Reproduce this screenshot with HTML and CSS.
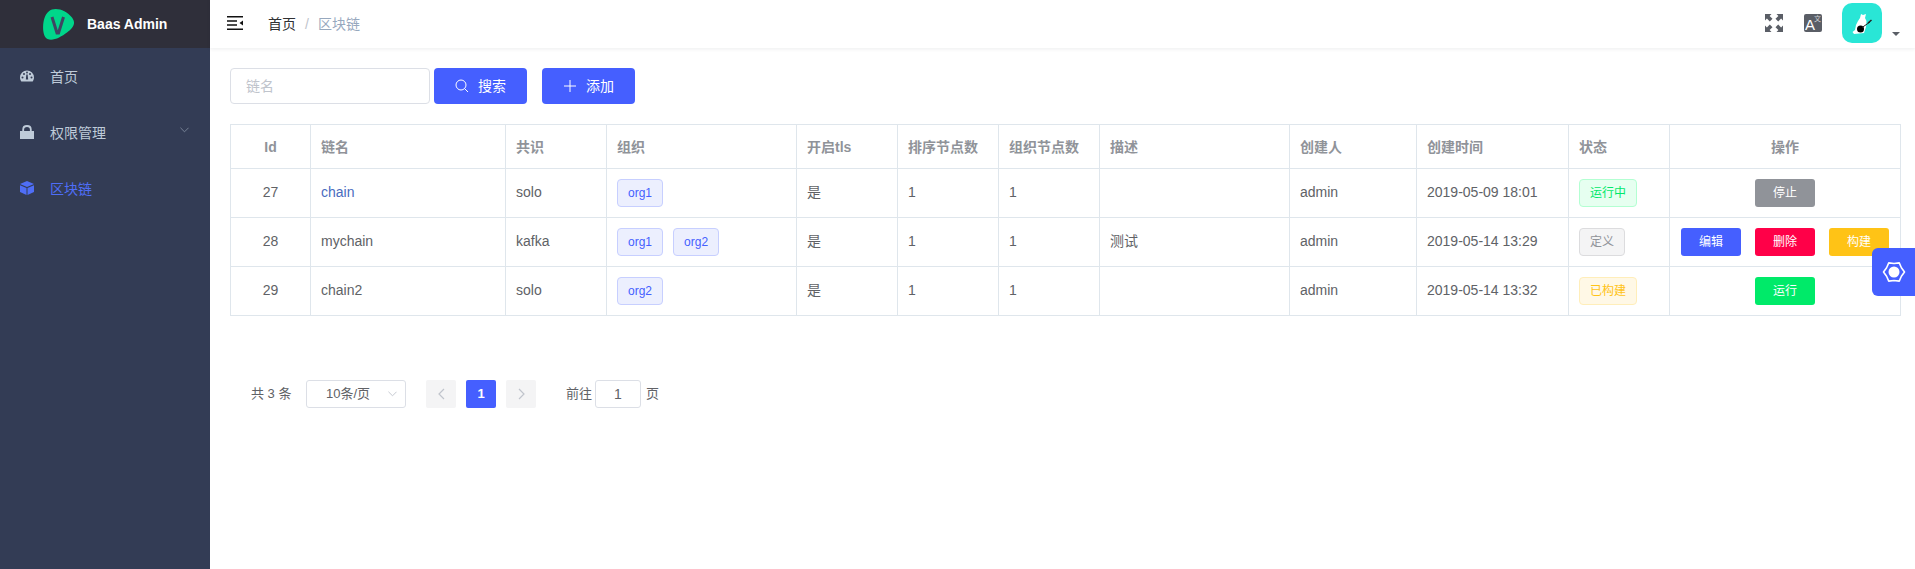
FILE: index.html
```html
<!DOCTYPE html>
<html lang="zh">
<head>
<meta charset="utf-8">
<title>Baas Admin</title>
<link rel="stylesheet" href="styles.css">
</head>
<body>
<div class="app">
  <aside class="sidebar">
    <div class="brand">
      <svg class="brand-logo" viewBox="0 0 32 32" width="32" height="32"><path d="M9 1.500C15 -.5 24 3 29 9.500C33.500 15.500 30 20 24 24.500C18 29 10 33.500 4.500 31C0 29 -.5 20 .5 14C1.500 8.500 4 3.200 9 1.500Z" fill="#00d68a"/><path d="M9 9L14 25H15.500L20.500 9" fill="none" stroke="#3f4562" stroke-width="3"/></svg>
      <span class="brand-name">Baas Admin</span>
    </div>
    <nav class="menu">
      <a class="menu-item">
        <svg class="menu-icon" viewBox="0 0 14 12"><path d="M7 .5A7 7 0 0 0 0 7.500C0 9 .5 10.300 1.300 11.500H12.700C13.500 10.300 14 9 14 7.500A7 7 0 0 0 7 .5Z" fill="#bfcbd9"/><g fill="#333c55"><circle cx="2.500" cy="7.500" r="1"/><circle cx="4" cy="4" r="1"/><circle cx="10" cy="4" r="1"/><circle cx="11.500" cy="7.500" r="1"/><circle cx="7" cy="2.500" r=".9"/><path d="M6.400 4.500H7.600L8.200 9.500H5.800Z"/></g></svg>
        <span>首页</span>
      </a>
      <a class="menu-item">
        <svg class="menu-icon" viewBox="0 0 14 14"><path d="M0 6H14V14H0Z" fill="#bfcbd9"/><path d="M3.200 6.500V4.500C3.200 2.300 4.800 1 7 1C9.200 1 10.800 2.300 10.800 4.500V6.500" fill="none" stroke="#bfcbd9" stroke-width="1.800"/></svg>
        <span>权限管理</span>
        <svg class="menu-arrow" viewBox="0 0 10 6"><path d="M.5.500L5 5L9.500.5" fill="none" stroke="#7f8a9e" stroke-width="1"/></svg>
      </a>
      <a class="menu-item active">
        <svg class="menu-icon" viewBox="0 0 14 14"><path d="M7 0L14 3L7 6L0 3Z" fill="#4f6ef7"/><path d="M0 4.200L6.500 7V14L0 11Z" fill="#4f6ef7"/><path d="M14 4.200L7.500 7V14L14 11Z" fill="#4f6ef7"/></svg>
        <span>区块链</span>
      </a>
    </nav>
  </aside>
  <div class="main">
    <header class="topbar">
      <svg class="hamburger" viewBox="0 0 16 14"><path d="M0 .75H16M0 4.900H10M0 9.100H10M0 13.250H16" stroke="#111" stroke-width="1.500" fill="none"/><path d="M16 4.500V9.500L12.500 7Z" fill="#111"/></svg>
      <div class="crumbs">
        <span class="crumb-home">首页</span>
        <span class="crumb-sep">/</span>
        <span class="crumb-now">区块链</span>
      </div>
      <div class="top-actions">
        <svg class="top-icon" viewBox="0 0 18 18"><g fill="#5a5e66"><path d="M0 0H6.500L4.600 1.900L7.500 4.800L4.800 7.500L1.900 4.600L0 6.500Z"/><path d="M18 0H11.500L13.400 1.900L10.500 4.800L13.200 7.500L16.100 4.600L18 6.500Z"/><path d="M0 18H6.500L4.600 16.100L7.500 13.200L4.800 10.500L1.900 13.400L0 11.500Z"/><path d="M18 18H11.500L13.400 16.100L10.500 13.200L13.200 10.500L16.100 13.400L18 11.500Z"/></g></svg>
        <div class="lang-icon"><span class="lang-a">A</span><span class="lang-x">文</span></div>
        <div class="avatar-wrap">
          <div class="avatar">
            <svg viewBox="0 0 40 40" width="40" height="40"><path d="M19 11L21 12L24 11L23 15L24.500 18L24 24L22 30L12 31L10.500 29L13 27L14 22L16 18L18 15Z" fill="#fff"/><circle cx="18.500" cy="26" r="3.500" fill="#000"/><path d="M20 24.500L28 19" stroke="#222" stroke-width="1"/><path d="M26 20L29.500 17" stroke="#222" stroke-width="1.500"/></svg>
          </div>
          <span class="caret"></span>
        </div>
      </div>
    </header>
    <main class="content">
      <div class="toolbar">
        <input class="search-input" type="text" placeholder="链名">
        <button class="btn btn-search">
          <svg class="btn-icon" viewBox="0 0 14 14"><circle cx="6" cy="6" r="5" fill="none" stroke="#fff" stroke-width="1"/><path d="M9.500 9.500L13 13" stroke="#fff" stroke-width="1"/></svg>
          <span>搜索</span>
        </button>
        <button class="btn btn-add">
          <svg class="btn-icon" viewBox="0 0 14 14"><path d="M7 1V13M1 7H13" stroke="#fff" stroke-width="1"/></svg>
          <span>添加</span>
        </button>
      </div>
      <table class="data">
        <colgroup>
          <col class="c-id"><col class="c-name"><col class="c-con"><col class="c-org"><col class="c-tls"><col class="c-num"><col class="c-num"><col class="c-desc"><col class="c-user"><col class="c-time"><col class="c-state"><col class="c-op">
        </colgroup>
        <thead>
          <tr>
            <th class="center">Id</th><th>链名</th><th>共识</th><th>组织</th><th>开启tls</th><th>排序节点数</th><th>组织节点数</th><th>描述</th><th>创建人</th><th>创建时间</th><th>状态</th><th class="center">操作</th>
          </tr>
        </thead>
        <tbody>
          <tr>
            <td class="center">27</td><td><a class="link">chain</a></td><td>solo</td>
            <td><span class="tag tag-org">org1</span></td>
            <td>是</td><td>1</td><td>1</td><td></td><td>admin</td><td>2019-05-09 18:01</td>
            <td><span class="tag tag-run">运行中</span></td>
            <td class="center"><button class="act act-gray">停止</button></td>
          </tr>
          <tr>
            <td class="center">28</td><td>mychain</td><td>kafka</td>
            <td><span class="tag tag-org">org1</span><span class="tag tag-org tag-next">org2</span></td>
            <td>是</td><td>1</td><td>1</td><td>测试</td><td>admin</td><td>2019-05-14 13:29</td>
            <td><span class="tag tag-def">定义</span></td>
            <td class="center"><div class="acts"><button class="act act-blue">编辑</button><button class="act act-red">删除</button><button class="act act-yellow">构建</button></div></td>
          </tr>
          <tr>
            <td class="center">29</td><td>chain2</td><td>solo</td>
            <td><span class="tag tag-org">org2</span></td>
            <td>是</td><td>1</td><td>1</td><td></td><td>admin</td><td>2019-05-14 13:32</td>
            <td><span class="tag tag-built">已构建</span></td>
            <td class="center"><button class="act act-green">运行</button></td>
          </tr>
        </tbody>
      </table>
      <div class="pager">
        <span class="total">共 3 条</span>
        <div class="size">
          <span>10条/页</span>
          <svg class="size-arrow" viewBox="0 0 10 6"><path d="M.5.500L5 5L9.500.5" fill="none" stroke="#c0c4cc" stroke-width="1"/></svg>
        </div>
        <button class="pg"><svg viewBox="0 0 7 12" class="pg-arrow"><path d="M6 1L1 6L6 11" fill="none" stroke="#c0c4cc" stroke-width="1.200"/></svg></button>
        <button class="pg pg-on">1</button>
        <button class="pg"><svg viewBox="0 0 7 12" class="pg-arrow"><path d="M1 1L6 6L1 11" fill="none" stroke="#c0c4cc" stroke-width="1.200"/></svg></button>
        <span class="goto">前往</span>
        <div class="goto-box">1</div>
        <span class="goto-end">页</span>
      </div>
    </main>
  </div>
  <div class="gear">
    <svg viewBox="0 0 24 24" width="24" height="24"><path d="M22.500 12L19.400 7.750L17.250 2.900L12 3.500L6.750 2.900L4.600 7.750L1.500 12L4.600 16.250L6.750 21.100L12 20.500L17.250 21.100L19.400 16.250Z" fill="none" stroke="#fff" stroke-width="1.600" stroke-linejoin="round"/><circle cx="12" cy="12" r="5.500" fill="#fff"/></svg>
  </div>
</div>
</body>
</html>
```

FILE: styles.css
```css
* { box-sizing: border-box; }
html, body { margin: 0; height: 100%; }
body {
  font-family: "Liberation Sans", "Noto Sans CJK SC", sans-serif;
  font-size: 14px;
  line-height: 20px;
  color: #606266;
  background: #fff;
  overflow: hidden;
}
.app { display: flex; height: 569px; position: relative; }

.sidebar { width: 210px; flex: none; background: #333c55; }
.brand {
  height: 48px;
  background: #2f2f3a;
  display: flex;
  align-items: center;
  padding-left: 43px;
}
.brand-logo { display: block; }
.brand-name {
  margin-left: 12px;
  color: #fff;
  font-size: 14px;
  font-weight: 700;
}
.menu { display: flex; flex-direction: column; }
.menu-item {
  height: 56px;
  display: flex;
  align-items: center;
  padding-left: 20px;
  color: #bfcbd9;
  font-size: 14px;
  line-height: normal;
  position: relative;
}
.menu-item.active { color: #4f6ef7; }
.menu-icon { width: 14px; height: 14px; margin-right: 16px; display: block; }
.menu-arrow { position: absolute; right: 21px; top: 23px; width: 9px; height: 6px; }

.main { flex: 1; min-width: 0; display: flex; flex-direction: column; }
.topbar {
  height: 48px;
  flex: none;
  display: flex;
  align-items: center;
  background: #fff;
  box-shadow: 0 1px 4px rgba(0, 21, 41, .08);
  padding-left: 17px;
}
.hamburger { width: 16px; height: 14px; display: block; margin-top: -3px; }
.crumbs { margin-left: 25px; display: flex; align-items: center; font-size: 14px; }
.crumb-home { color: #303133; }
.crumb-sep { color: #c0c4cc; margin: 0 9px; }
.crumb-now { color: #97a8be; }
.top-actions { margin-left: auto; display: flex; align-items: flex-start; height: 48px; }
.top-icon { width: 18px; height: 18px; margin-top: 14px; display: block; }
.lang-icon {
  width: 18px;
  height: 18px;
  margin: 14px 0 0 21px;
  background: #5a5e66;
  border-radius: 2px;
  position: relative;
  color: #fff;
}
.lang-a { position: absolute; left: 1px; top: 3px; font-size: 15px; line-height: 15px; }
.lang-x { position: absolute; right: 1px; top: 1px; font-size: 7px; line-height: 8px; color: #d0d0d4; }
.avatar-wrap { margin-left: 20px; width: 73px; position: relative; }
.avatar { width: 40px; height: 40px; margin-top: 3px; background: #29e6d6; border-radius: 10px; }
.caret {
  position: absolute;
  left: 50px;
  top: 32px;
  border: 4px solid transparent;
  border-top: 4px solid #5a5e66;
  border-bottom: 0;
}

.content { flex: 1; padding: 20px 15px 0 20px; }
.toolbar { display: flex; align-items: stretch; height: 36px; }
.search-input {
  width: 200px;
  height: 36px;
  padding: 0 15px;
  border: 1px solid #dcdfe6;
  border-radius: 4px;
  font: inherit;
  color: #606266;
  outline: 0;
  background: #fff;
}
.search-input::placeholder { color: #c0c4cc; }
.btn {
  width: 93px;
  height: 36px;
  border: 0;
  border-radius: 4px;
  background: #455fff;
  color: #fff;
  font: inherit;
  display: flex;
  align-items: center;
  justify-content: center;
  padding: 0;
}
.btn-icon { width: 14px; height: 14px; margin-right: 9px; display: block; }
.btn-search { margin-left: 4px; }
.btn-add { margin-left: 15px; }

.data {
  margin-top: 20px;
  width: 1670px;
  table-layout: fixed;
  border-collapse: collapse;
  font-size: 14px;
}
.c-id { width: 80px; }
.c-name { width: 195px; }
.c-con { width: 101px; }
.c-org { width: 190px; }
.c-tls { width: 101px; }
.c-num { width: 101px; }
.c-desc { width: 190px; }
.c-user { width: 127px; }
.c-time { width: 152px; }
.c-state { width: 101px; }
.c-op { width: 231px; }
.data th, .data td {
  border: 1px solid #dfe6ec;
  padding: 0 10px;
  text-align: left;
  white-space: nowrap;
}
.data th { height: 44px; color: #909399; font-weight: 700; }
.data td { height: 49px; color: #606266; padding-bottom: 2px; }
.data .center { text-align: center; }
.link { color: #4a6cc0; }
.tag {
  display: inline-block;
  height: 28px;
  line-height: 26px;
  padding: 0 10px;
  margin-top: 2px;
  border: 1px solid;
  border-radius: 4px;
  font-size: 12px;
  vertical-align: middle;
}
.tag-org { background: #eceffe; border-color: #c7cfff; color: #455fff; }
.tag-next { margin-left: 10px; }
.tag-run { background: #e6fff0; border-color: #b3ffd2; color: #00e96a; }
.tag-def { background: #f4f4f5; border-color: #dcdcde; color: #909399; }
.tag-built { background: #fff8e6; border-color: #ffeeba; color: #ffc316; }
.act {
  width: 60px;
  height: 28px;
  margin-top: 2px;
  border: 0;
  border-radius: 3px;
  color: #fff;
  font: inherit;
  font-size: 12px;
  padding: 0;
  vertical-align: middle;
}
.acts { display: flex; justify-content: space-between; padding: 0 1px; }
.act-gray { background: #909399; }
.act-blue { background: #455fff; }
.act-red { background: #ff0048; }
.act-yellow { background: #ffc316; }
.act-green { background: #00ea69; }

.pager { display: flex; align-items: center; height: 28px; margin-top: 64px; padding-left: 21px; font-size: 13px; }
.total { width: 55px; flex: none; }
.size {
  width: 100px;
  height: 28px;
  border: 1px solid #dcdfe6;
  border-radius: 3px;
  display: flex;
  align-items: center;
  padding-left: 19px;
  position: relative;
}
.size-arrow { position: absolute; right: 8px; top: 10px; width: 9px; height: 6px; }
.pg {
  width: 30px;
  height: 28px;
  border: 0;
  border-radius: 2px;
  background: #f4f4f5;
  margin-left: 10px;
  padding: 0;
  display: flex;
  align-items: center;
  justify-content: center;
  font: inherit;
  font-weight: 700;
}
.size + .pg { margin-left: 20px; }
.pg-on { background: #455fff; color: #fff; }
.pg-arrow { width: 7px; height: 12px; display: block; }
.goto { margin-left: 30px; }
.goto-box {
  width: 46px;
  height: 28px;
  line-height: 26px;
  margin-left: 3px;
  text-align: center;
  border: 1px solid #dcdfe6;
  border-radius: 3px;
  font-size: 14px;
}
.goto-end { margin-left: 5px; }

.gear {
  position: absolute;
  right: 0;
  top: 248px;
  width: 43px;
  height: 48px;
  background: #455fff;
  border-radius: 6px 0 0 6px;
  display: flex;
  align-items: center;
  justify-content: center;
}
```
